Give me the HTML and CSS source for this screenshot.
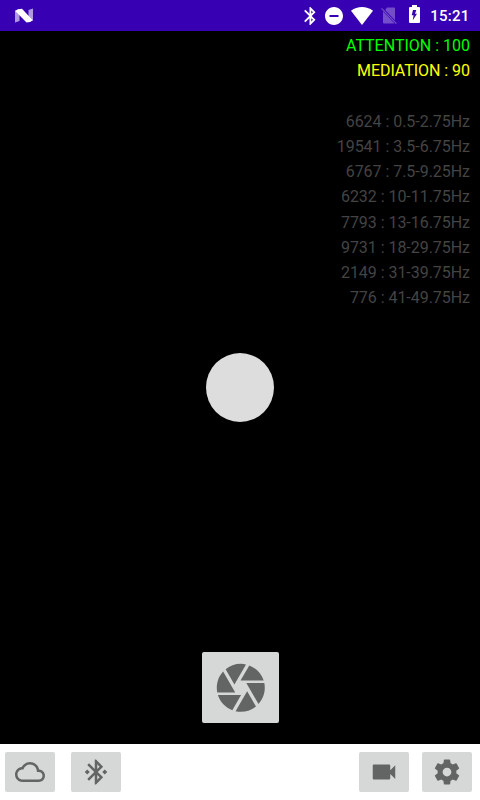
FILE: index.html
```html
<!DOCTYPE html>
<html lang="en">
<head>
<meta charset="utf-8">
<title>Camera</title>
<link rel="stylesheet" href="styles.css">
</head>
<body>
<div class="screen">
  <header class="status">
    <svg class="logo" viewBox="0 0 18 15"><path class="dim" d="M0 2.500 4.500 1V13L0 14.500zM13.500 2 18 .500V12.500L13.500 14z"/><path d="M.300 2.900Q2.500.800 7 .700L17.700 12.200Q15.500 14.500 11.500 14.600Z"/></svg>
    <div class="indicators">
      <svg class="bt" viewBox="4 2 14 20"><path d="M17.710 7.710L12 2h-1v7.590L6.410 5 5 6.410 10.590 12 5 17.590 6.410 19 11 14.410V22h1l5.710-5.710-4.300-4.290 4.300-4.290zM13 5.830l1.880 1.880L13 9.590V5.830zm1.880 10.460L13 18.170v-3.760l1.880 1.880z"/></svg>
      <svg class="dnd" viewBox="2 2 20 20"><path d="M12 2C6.480 2 2 6.480 2 12s4.480 10 10 10 10-4.480 10-10S17.520 2 12 2zm5 11H7v-2h10v2z"/></svg>
      <svg class="wifi" viewBox="0 0 22 18"><path d="M11 18 0 3.700Q5 0 11 0T22 3.700Z"/></svg>
      <svg class="sim" viewBox="0 0 16 17"><path d="M6 .500h7q1 0 1 1v11.800L4.200 2.900zM2 4.300 13.500 16.500H3q-1 0-1-1z"/><path class="slash" d="M.6 1.300 15.400 16.700"/></svg>
      <svg class="battery" viewBox="0 0 11 18"><path fill-rule="evenodd" d="M3 0h5v2h2q1 0 1 1v14q0 1-1 1H1q-1 0-1-1V3q0-1 1-1h2zM4 5 2.700 10.300H4.600L3.800 15.300 8 8.800H6L7.300 5z"/></svg>
      <span class="clock">15:21</span>
    </div>
  </header>
  <main class="preview">
    <div class="readings">
      <div class="attention">ATTENTION : 100</div>
      <div class="mediation">MEDIATION : 90</div>
      <div class="bands">
        <div>6624 : 0.5-2.75Hz</div>
        <div>19541 : 3.5-6.75Hz</div>
        <div>6767 : 7.5-9.25Hz</div>
        <div>6232 : 10-11.75Hz</div>
        <div>7793 : 13-16.75Hz</div>
        <div>9731 : 18-29.75Hz</div>
        <div>2149 : 31-39.75Hz</div>
        <div>776 : 41-49.75Hz</div>
      </div>
    </div>
    <div class="dot"></div>
    <button class="shutter" aria-label="Shutter"><svg viewBox="0 0 24 24"><path d="M9.400 10.500l4.770-8.260C13.470 2.090 12.750 2 12 2c-2.400 0-4.600.850-6.320 2.250l3.660 6.350.060-.100zM21.540 9c-.920-2.920-3.150-5.260-6-6.340L11.880 9h9.660zm.260 1h-7.490l.290.500 4.760 8.250C21 16.970 22 14.610 22 12c0-.690-.070-1.350-.200-2zM8.540 12l-3.900-6.750C3.010 7.030 2 9.390 2 12c0 .690.070 1.350.200 2h7.490l-1.150-2zm-6.080 3c.920 2.920 3.150 5.260 6 6.340L12.120 15H2.460zm11.270 0l-3.900 6.760c.700.150 1.420.240 2.170.240 2.400 0 4.600-.850 6.320-2.250l-3.660-6.350-.930 1.600z"/></svg></button>
  </main>
  <footer class="toolbar">
    <button class="tool" aria-label="Cloud"><svg viewBox="0 0 24 24"><path d="M19.350 10.040C18.670 6.590 15.640 4 12 4 9.110 4 6.600 5.640 5.350 8.040 2.340 8.360 0 10.910 0 14c0 3.310 2.690 6 6 6h13c2.760 0 5-2.240 5-5 0-2.640-2.050-4.780-4.650-4.960zM19 18H6c-2.210 0-4-1.790-4-4s1.790-4 4-4h.710C7.370 7.690 9.480 6 12 6c3.040 0 5.500 2.460 5.500 5.500v.500H19c1.660 0 3 1.340 3 3s-1.340 3-3 3z"/></svg></button>
    <button class="tool" aria-label="Bluetooth"><svg viewBox="0 0 24 24"><path d="M7 12l-2-2-2 2 2 2 2-2zm10.710-4.290L12 2h-1v7.590L6.410 5 5 6.410 10.590 12 5 17.590 6.410 19 11 14.410V22h1l5.710-5.710-4.300-4.290 4.300-4.290zM13 5.830l1.880 1.880L13 9.590V5.830zm1.880 10.460L13 18.170v-3.760l1.880 1.880zM19 10l-2 2 2 2 2-2-2-2z"/></svg></button>
    <button class="tool video" aria-label="Video"><svg viewBox="0 0 24 24"><path d="M17 10.500V7c0-.550-.450-1-1-1H4c-.550 0-1 .450-1 1v10c0 .550.450 1 1 1h12c.550 0 1-.450 1-1v-3.500l4 4v-11l-4 4z"/></svg></button>
    <button class="tool settings" aria-label="Settings"><svg viewBox="0 0 24 24"><path d="M19.430 12.980c.040-.320.070-.640.070-.980s-.030-.660-.070-.980l2.110-1.650c.190-.150.240-.420.120-.640l-2-3.460c-.120-.220-.390-.300-.610-.220l-2.490 1c-.520-.400-1.080-.730-1.690-.980l-.380-2.650C14.460 2.180 14.250 2 14 2h-4c-.250 0-.460.180-.490.420l-.380 2.650c-.610.250-1.170.590-1.690.980l-2.490-1c-.230-.090-.490 0-.610.220l-2 3.460c-.130.220-.070.490.120.640l2.110 1.650c-.040.320-.070.650-.070.980s.030.660.070.980l-2.110 1.650c-.190.150-.240.420-.120.640l2 3.460c.120.220.390.300.610.220l2.490-1c.520.400 1.080.730 1.690.980l.380 2.650c.030.240.240.420.490.420h4c.250 0 .460-.180.490-.420l.380-2.650c.610-.250 1.170-.590 1.690-.980l2.490 1c.230.090.490 0 .610-.220l2-3.460c.120-.220.070-.490-.120-.640l-2.110-1.650zM12 15.500c-1.930 0-3.500-1.570-3.500-3.500s1.570-3.500 3.500-3.500 3.500 1.570 3.500 3.500-1.570 3.500-3.500 3.500z"/></svg></button>
  </footer>
</div>
</body>
</html>
```
FILE: styles.css
```css
* { box-sizing: border-box; }
body { margin: 0; font-family: Roboto, sans-serif; }
svg { display: block; }
button { border: 0; padding: 0; background: #d6d8d7; border-radius: 2px; display: flex; align-items: center; justify-content: center; }
button svg { fill: #636564; }

.screen { width: 480px; height: 800px; display: flex; flex-direction: column; background: #fff; }

.status { height: 31px; background: #3700b3; display: flex; align-items: center; justify-content: space-between; padding: 0 10.500px 0 15px; }
.status svg { fill: #fff; }
.status .dim { opacity: .6; }
.logo { width: 18px; height: 15px; }
.indicators { display: flex; align-items: center; }
.bt { width: 13px; height: 18px; margin-right: 9px; }
.dnd { width: 18px; height: 18px; margin-right: 8px; }
.wifi { width: 22px; height: 18px; margin-right: 8px; }
.sim { width: 16px; height: 17px; margin-right: 12px; opacity: .3; }
.sim .slash { stroke: #fff; stroke-width: 1.2; }
.battery { width: 11px; height: 18px; margin-right: 10px; position: relative; top: -1.500px; }
.clock { color: #fff; font-size: 15px; font-weight: 500; line-height: 18px; letter-spacing: .250px; }

.preview { height: 713px; background: #000; display: flex; flex-direction: column; align-items: center; }
.readings { align-self: stretch; height: 322px; padding: 2px 10px 0 0; text-align: right; font-size: 16px; line-height: 25.150px; }
.attention { color: #0f0; }
.mediation { color: #ff0; letter-spacing: -.040px; }
.bands { margin-top: 25.700px; color: #444; letter-spacing: -.040px; }
.dot { width: 68px; height: 69px; border-radius: 50%; background: #ddd; }
.shutter { width: 77px; height: 71px; margin-top: 230px; padding-left: 1px; }
.shutter svg { width: 57.600px; height: 57.600px; }

.toolbar { height: 56px; display: flex; align-items: flex-start; padding: 8px 8px 0 5px; }
.tool { width: 50px; height: 40px; margin-right: 16px; }
.tool svg { width: 30px; height: 30px; }
.tool.video { margin-left: auto; margin-right: 13px; }
.tool.settings { margin-right: 0; }
```
